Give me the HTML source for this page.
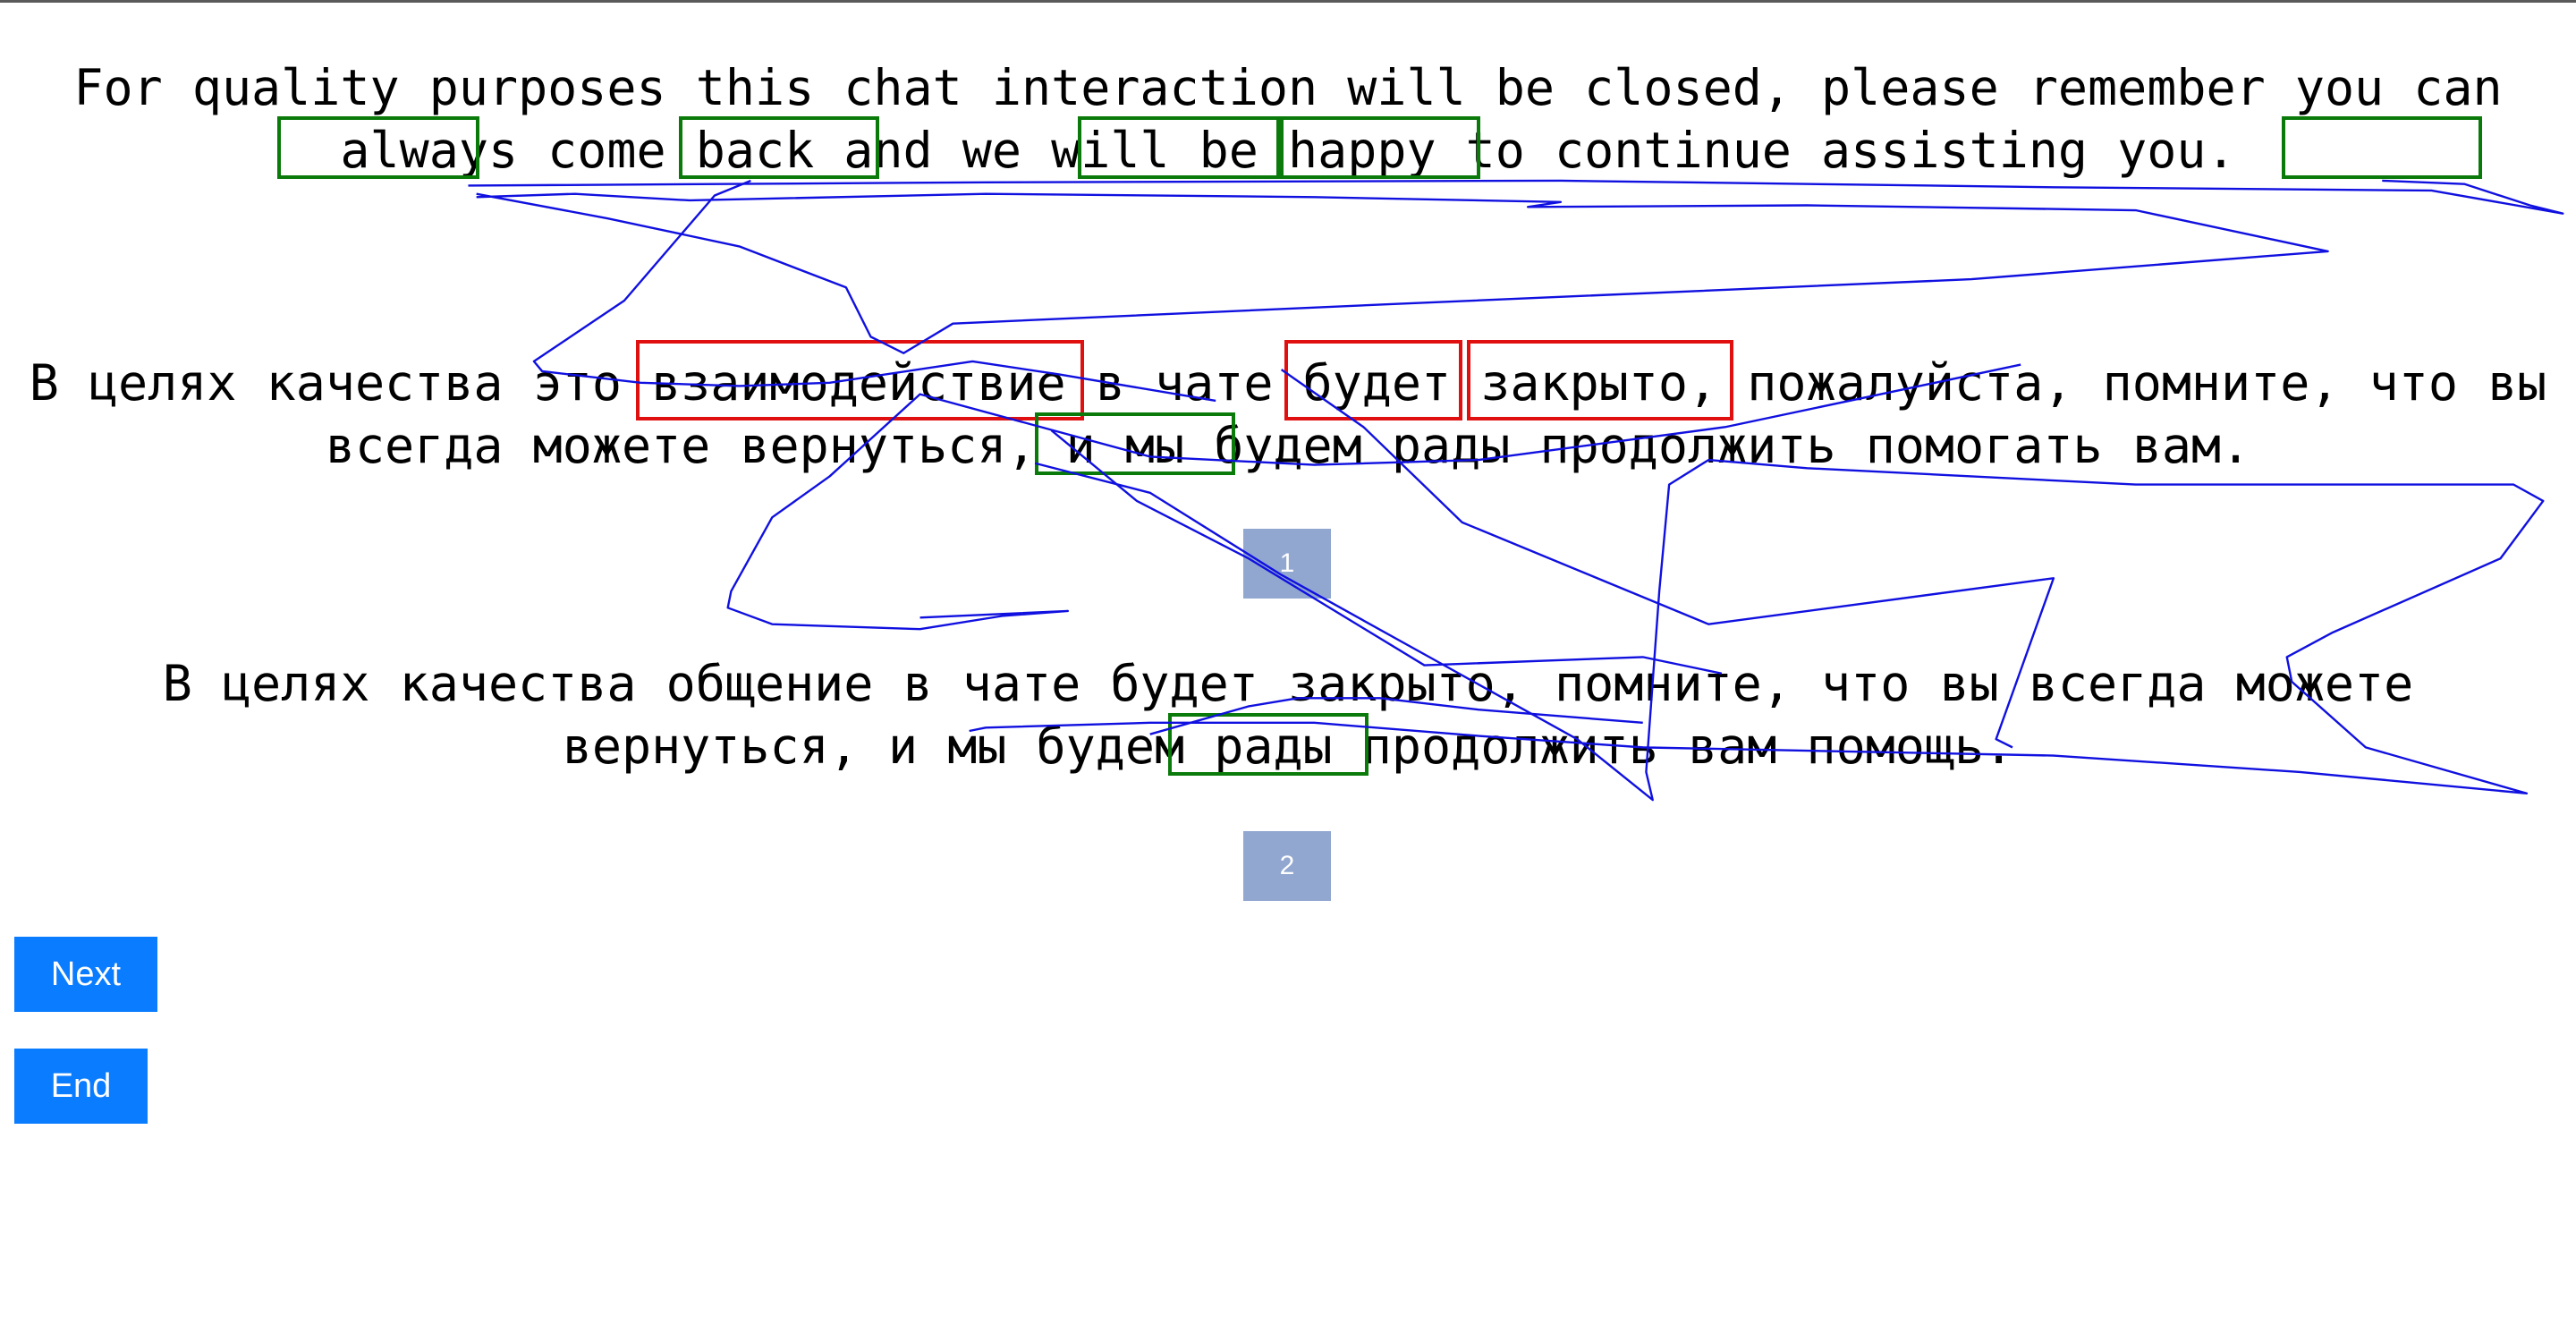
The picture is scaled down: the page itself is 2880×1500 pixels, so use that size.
<!DOCTYPE html>
<html><head><meta charset="utf-8"><style>
html,body{margin:0;padding:0;background:#fff;width:2880px;height:1500px;overflow:hidden;position:relative}
.topbar{position:absolute;left:0;top:0;width:2880px;height:3px;background:#5a5a5a}
.p{position:absolute;left:0;width:2880px;text-align:center;white-space:nowrap;font-family:"DejaVu Sans Mono","Liberation Mono",monospace;font-size:55px;line-height:70px;color:#000}
.box{position:absolute;box-sizing:border-box;border:4px solid #0a7a0a}
.red{border-color:#e01010}
.num{position:absolute;left:1390px;width:98px;height:78px;background:#91a7d0;color:#fff;font-family:"Liberation Sans",sans-serif;font-size:30px;line-height:78px;text-align:center}
.btn{position:absolute;left:16px;height:84px;background:#0a7cff;color:#fff;font-family:"Liberation Sans",sans-serif;font-size:38px;line-height:84px;text-align:center}
svg{position:absolute;left:0;top:0}
</style></head><body>
<div class="topbar"></div>
<div class="p" style="top:63px">For quality purposes this chat interaction will be closed, please remember you can<br>always come back and we will be happy to continue assisting you.</div>
<div class="p" style="top:393px">В целях качества это взаимодействие в чате будет закрыто, пожалуйста, помните, что вы<br>всегда можете вернуться, и мы будем рады продолжить помогать вам.</div>
<div class="num" style="top:591px">1</div>
<div class="p" style="top:729px">В целях качества общение в чате будет закрыто, помните, что вы всегда можете<br>вернуться, и мы будем рады продолжить вам помощь.</div>
<div class="num" style="top:929px">2</div>
<div class="btn" style="top:1047px;width:160px">Next</div>
<div class="btn" style="top:1172px;width:149px">End</div>

<div class="box" style="left:310px;top:130px;width:226px;height:70px"></div>
<div class="box" style="left:759px;top:130px;width:224px;height:70px"></div>
<div class="box" style="left:1205px;top:130px;width:226px;height:70px"></div>
<div class="box" style="left:1431px;top:130px;width:224px;height:70px"></div>
<div class="box" style="left:2551px;top:130px;width:224px;height:70px"></div>
<div class="box red" style="left:711px;top:380px;width:501px;height:90px"></div>
<div class="box red" style="left:1436px;top:380px;width:199px;height:90px"></div>
<div class="box red" style="left:1640px;top:380px;width:298px;height:90px"></div>
<div class="box" style="left:1157px;top:461px;width:224px;height:70px"></div>
<div class="box" style="left:1306px;top:797px;width:224px;height:70px"></div>

<svg width="2880" height="1500" viewBox="0 0 1568 817" preserveAspectRatio="none">
<g fill="none" stroke="#1010e0" stroke-width="1.3" stroke-linejoin="round">
<polyline points="285,113 600,111 950,110 1250,114 1480,116 1560,130 1540,125 1500,112 1450,110"/>
<polyline points="290,120 350,118 420,122 600,118 800,120 950,123 930,126 1100,125 1300,128 1417,153 1200,170 850,185 580,197 550,215 530,205 515,175 450,150 370,133 290,118"/>
<polyline points="457,110 435,119 380,183 325,220 330,226 390,233 450,235 505,233 592,220 645,228 740,244"/>
<polyline points="1230,222 1050,260 900,280 800,283 700,278 560,240 505,290 470,315 445,360 443,370 470,380 560,383 610,375 650,372 560,376"/>
<polyline points="630,282 700,300 780,350 870,400 960,450 1006,487 1002,470 1010,360 1016,295 1040,280 1100,285 1300,295 1530,295 1548,305 1522,340 1420,385 1392,400 1395,415 1440,455 1538,483 1400,470 1250,460 1000,455 900,448 800,440 700,440 600,443 590,445"/>
<polyline points="640,262 692,305 760,340 867,405 1000,400 1048,410"/>
<polyline points="780,225 830,260 890,318 1040,380 1250,352 1215,450 1225,455"/>
<polyline points="700,447 760,430 790,425 840,425 900,432 1000,440"/>
</g></svg>
</body></html>
